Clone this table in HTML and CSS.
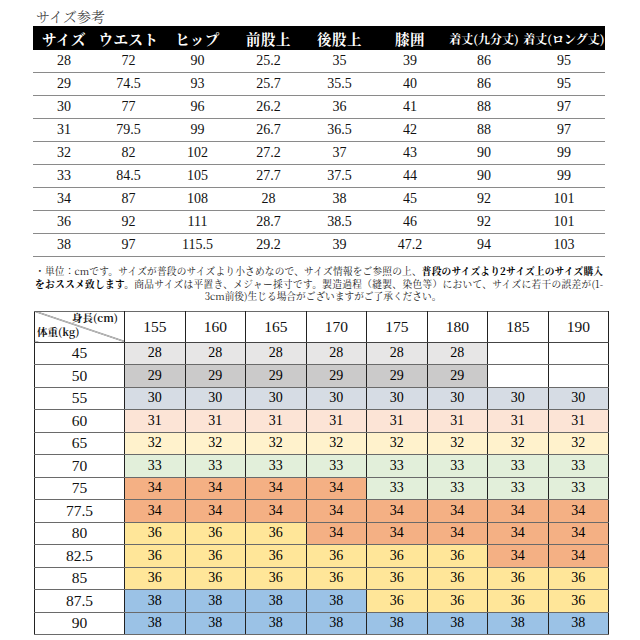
FILE: index.html
```html
<!DOCTYPE html>
<html lang="ja">
<head>
<meta charset="utf-8">
<title>サイズ参考</title>
<link rel="stylesheet" href="styles.css">
</head>
<body>
<div class="page">
  <div class="title">サイズ参考</div>
  <table class="spec">
    <colgroup>
      <col style="width:62px"><col style="width:67px"><col style="width:71px"><col style="width:71px"><col style="width:71px"><col style="width:70px"><col style="width:78px"><col style="width:82px">
    </colgroup>
    <thead>
      <tr><th>サイズ</th><th>ウエスト</th><th>ヒップ</th><th>前股上</th><th>後股上</th><th>膝囲</th><th class="small">着丈(九分丈)</th><th class="small">着丈(ロング丈)</th></tr>
    </thead>
    <tbody>
      <tr><td>28</td><td>72</td><td>90</td><td>25.2</td><td>35</td><td>39</td><td>86</td><td>95</td></tr>
      <tr><td>29</td><td>74.5</td><td>93</td><td>25.7</td><td>35.5</td><td>40</td><td>86</td><td>95</td></tr>
      <tr><td>30</td><td>77</td><td>96</td><td>26.2</td><td>36</td><td>41</td><td>88</td><td>97</td></tr>
      <tr><td>31</td><td>79.5</td><td>99</td><td>26.7</td><td>36.5</td><td>42</td><td>88</td><td>97</td></tr>
      <tr><td>32</td><td>82</td><td>102</td><td>27.2</td><td>37</td><td>43</td><td>90</td><td>99</td></tr>
      <tr><td>33</td><td>84.5</td><td>105</td><td>27.7</td><td>37.5</td><td>44</td><td>90</td><td>99</td></tr>
      <tr><td>34</td><td>87</td><td>108</td><td>28</td><td>38</td><td>45</td><td>92</td><td>101</td></tr>
      <tr><td>36</td><td>92</td><td>111</td><td>28.7</td><td>38.5</td><td>46</td><td>92</td><td>101</td></tr>
      <tr><td>38</td><td>97</td><td>115.5</td><td>29.2</td><td>39</td><td>47.2</td><td>94</td><td>103</td></tr>
    </tbody>
  </table>
  <div class="notes">
    <div class="line">・単位：cmです。サイズが普段のサイズより小さめなので、サイズ情報をご参照の上、<b>普段のサイズより2サイズ上のサイズ購入</b></div>
    <div class="line"><b>をおススメ致します。</b>商品サイズは平置き、メジャー採寸です。製造過程（縫製、染色等）において、サイズに若干の誤差が(1-</div>
    <div class="last">3cm前後)生じる場合がございますがご了承ください。</div>
  </div>
  <table class="chart">
    <colgroup>
      <col class="first"><col><col><col><col><col><col><col><col>
    </colgroup>
    <thead>
      <tr>
        <th class="corner"><span class="h">身長(cm)</span><span class="w">体重(kg)</span></th>
        <th>155</th><th>160</th><th>165</th><th>170</th><th>175</th><th>180</th><th>185</th><th>190</th>
      </tr>
    </thead>
    <tbody>
      <tr><th>45</th><td class="c28">28</td><td class="c28">28</td><td class="c28">28</td><td class="c28">28</td><td class="c28">28</td><td class="c28">28</td><td></td><td></td></tr>
      <tr><th>50</th><td class="c29">29</td><td class="c29">29</td><td class="c29">29</td><td class="c29">29</td><td class="c29">29</td><td class="c29">29</td><td></td><td></td></tr>
      <tr><th>55</th><td class="c30">30</td><td class="c30">30</td><td class="c30">30</td><td class="c30">30</td><td class="c30">30</td><td class="c30">30</td><td class="c30">30</td><td class="c30">30</td></tr>
      <tr><th>60</th><td class="c31">31</td><td class="c31">31</td><td class="c31">31</td><td class="c31">31</td><td class="c31">31</td><td class="c31">31</td><td class="c31">31</td><td class="c31">31</td></tr>
      <tr><th>65</th><td class="c32">32</td><td class="c32">32</td><td class="c32">32</td><td class="c32">32</td><td class="c32">32</td><td class="c32">32</td><td class="c32">32</td><td class="c32">32</td></tr>
      <tr><th>70</th><td class="c33">33</td><td class="c33">33</td><td class="c33">33</td><td class="c33">33</td><td class="c33">33</td><td class="c33">33</td><td class="c33">33</td><td class="c33">33</td></tr>
      <tr><th>75</th><td class="c34">34</td><td class="c34">34</td><td class="c34">34</td><td class="c34">34</td><td class="c33">33</td><td class="c33">33</td><td class="c33">33</td><td class="c33">33</td></tr>
      <tr><th>77.5</th><td class="c34">34</td><td class="c34">34</td><td class="c34">34</td><td class="c34">34</td><td class="c34">34</td><td class="c34">34</td><td class="c34">34</td><td class="c34">34</td></tr>
      <tr><th>80</th><td class="c36">36</td><td class="c36">36</td><td class="c36">36</td><td class="c34">34</td><td class="c34">34</td><td class="c34">34</td><td class="c34">34</td><td class="c34">34</td></tr>
      <tr><th>82.5</th><td class="c36">36</td><td class="c36">36</td><td class="c36">36</td><td class="c36">36</td><td class="c36">36</td><td class="c36">36</td><td class="c34">34</td><td class="c34">34</td></tr>
      <tr><th>85</th><td class="c36">36</td><td class="c36">36</td><td class="c36">36</td><td class="c36">36</td><td class="c36">36</td><td class="c36">36</td><td class="c36">36</td><td class="c36">36</td></tr>
      <tr><th>87.5</th><td class="c38">38</td><td class="c38">38</td><td class="c38">38</td><td class="c38">38</td><td class="c36">36</td><td class="c36">36</td><td class="c36">36</td><td class="c36">36</td></tr>
      <tr><th>90</th><td class="c38">38</td><td class="c38">38</td><td class="c38">38</td><td class="c38">38</td><td class="c38">38</td><td class="c38">38</td><td class="c38">38</td><td class="c38">38</td></tr>
    </tbody>
  </table>
</div>
</body>
</html>
```
FILE: styles.css
```css
html, body {
  margin: 0;
  padding: 0;
  background: #fff;
}
body {
  font-family: "Liberation Serif", "Noto Serif CJK JP", "Noto Sans CJK JP", serif;
  color: #111;
}
.page {
  padding: 7px 0 0 33px;
}
.title {
  font-family: "Noto Serif CJK JP", "Noto Sans CJK JP", sans-serif;
  font-weight: 300;
  font-size: 14px;
  line-height: 19px;
  color: #333;
  padding-left: 3px;
}
.spec {
  border-collapse: collapse;
  table-layout: fixed;
  width: 572px;
}
.spec th {
  background: #000;
  color: #fff;
  font-family: "Noto Serif CJK JP", "Noto Sans CJK JP", sans-serif;
  font-weight: 700;
  font-size: 14.5px;
  letter-spacing: 0.5px;
  height: 24px;
  padding: 0;
  white-space: nowrap;
  text-align: center;
}
.spec th.small {
  font-size: 12px;
  letter-spacing: 0;
}
.spec td {
  height: 22px;
  padding: 0;
  text-align: center;
  font-size: 14px;
  border-bottom: 1.5px solid #8a8a8a;
  color: #111;
}
.notes {
  width: 568px;
  padding: 8px 0 0 2px;
  font-family: "Noto Serif CJK JP", "Noto Sans CJK JP", sans-serif;
  font-size: 9.7px;
  line-height: 12.5px;
  color: #222;
}
.notes .line {
  text-align: justify;
  text-align-last: justify;
}
.notes b {
  font-weight: 700;
  color: #000;
}
.notes .last {
  text-align: center;
  padding-left: 8px;
}
.chart {
  margin-top: 8px;
  margin-left: 1px;
  border-collapse: collapse;
  table-layout: fixed;
  width: 575px;
  border: 1px solid #555;
}
.chart col.first {
  width: 90px;
}
.chart th, .chart td {
  padding: 0;
  text-align: center;
  border-left: 1px solid #222;
  border-right: 1px solid #222;
  border-top: 1px solid #6a6a6a;
  border-bottom: 1px solid #6a6a6a;
}
.chart thead th {
  height: 30px;
  font-size: 15.5px;
  font-weight: 400;
  background: #fff;
  border-bottom: 1px solid #444;
}
.chart tbody th {
  height: 21.5px;
  font-size: 15.5px;
  font-weight: 400;
  background: #fff;
}
.chart tbody td {
  font-size: 14px;
  color: #000;
}
.chart th.corner {
  background: linear-gradient(to top right, transparent calc(50% - 0.7px), #333 50%, transparent calc(50% + 0.7px));
  font-family: "Noto Serif CJK JP", "Noto Sans CJK JP", sans-serif;
  font-size: 10.5px;
  font-weight: 700;
  text-align: left;
  vertical-align: top;
}
.corner .h {
  display: block;
  text-align: right;
  padding-right: 6px;
  line-height: 12px;
  margin-top: 0;
}
.corner .w {
  display: block;
  padding-left: 2px;
  line-height: 12px;
  margin-top: 2px;
}
.c28 { background: #e7e6e6; }
.c29 { background: #cbcaca; }
.c30 { background: #d6dce4; }
.c31 { background: #fce4d6; }
.c32 { background: #fff2cc; }
.c33 { background: #e2efda; }
.c34 { background: #f4b084; }
.c36 { background: #ffe699; }
.c38 { background: #9bc2e6; }
```
